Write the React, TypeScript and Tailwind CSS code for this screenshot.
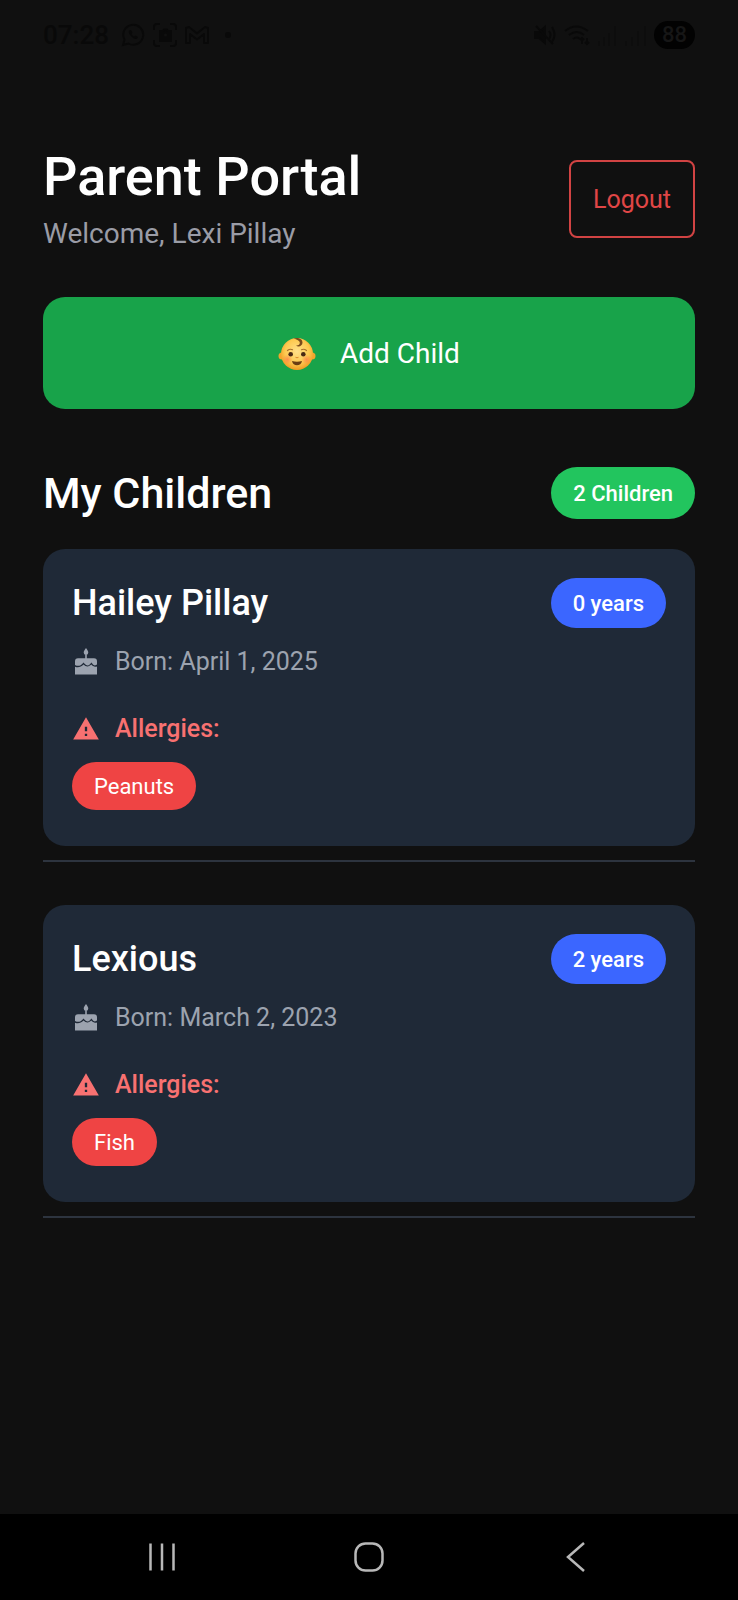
import { MdWarning } from "react-icons/md";

type Child = { name: string; age: number; born: string; allergies: string[] };

const children: Child[] = [
  { name: "Hailey Pillay", age: 0, born: "April 1, 2025", allergies: ["Peanuts"] },
  { name: "Lexious", age: 2, born: "March 2, 2023", allergies: ["Fish"] },
];

function CakeIcon() {
  return (
    <svg className="size-7 shrink-0" viewBox="0 0 28 28" fill="currentColor" aria-hidden="true">
      <path d="M14 0c1.300 2 2.300 3.200 2.300 4.600a2.300 2.300 0 0 1-4.600 0C11.700 3.200 12.700 2 14 0z" />
      <path d="M13.200 6.500h1.600V11h-1.600z" />
      <path d="M6 10h16a3 3 0 0 1 3 3v3.300c-1.800 1.400-3.300.9-4.600-.8l-1-1.200-1.200 1.300c-1.800 2-3.700 2-5.400.1L11.500 14.300l-1.300 1.300c-2 2.100-4.500 2.600-7.200 1V13a3 3 0 0 1 3-3z" transform="translate(0 .3)" />
      <path d="M3 18.700c3 1.200 5.800.6 8.500-2.200 2.500 2.500 5.400 2.500 7.800.1 1.600 1.900 3.500 2.600 5.700 1.800V26.500H3z" />
    </svg>
  );
}

function BabyIcon() {
  return (
    <svg className="h-9 w-[38px]" viewBox="0 0 38 36" aria-hidden="true">
      <defs>
        <radialGradient id="skin" cx="50%" cy="42%" r="58%">
          <stop offset="0" stopColor="#ffe08a" />
          <stop offset="0.65" stopColor="#fdc94f" />
          <stop offset="1" stopColor="#ef9a22" />
        </radialGradient>
        <radialGradient id="cheek">
          <stop offset="0" stopColor="#ff7a4a" stopOpacity="0.7" />
          <stop offset="1" stopColor="#ff7a4a" stopOpacity="0" />
        </radialGradient>
      </defs>
      <circle cx="4" cy="20" r="3.500" fill="#f3a52c" />
      <circle cx="34" cy="20" r="3.500" fill="#f3a52c" />
      <circle cx="19" cy="18" r="16" fill="url(#skin)" />
      <circle cx="9.500" cy="23.500" r="5" fill="url(#cheek)" />
      <circle cx="28.500" cy="23.500" r="5" fill="url(#cheek)" />
      <path d="M15.500 2.500c4-1.500 9 0 9 4 0 3.500-4 5-6.500 3 2.500.2 4-1 3.800-3C21.600 4.500 19 3.500 15.500 2.500z" fill="#7a4a1c" />
      <path d="M9.500 14.500q2.500-2 5-.8M23.500 13.700q2.500-1.200 5 .8" fill="none" stroke="#a9702a" strokeWidth="1.200" strokeLinecap="round" />
      <circle cx="12.700" cy="18.300" r="2.300" fill="#4a2a14" />
      <circle cx="25.300" cy="18.300" r="2.300" fill="#4a2a14" />
      <path d="M17.800 21.500q1.200.8 2.400 0" fill="none" stroke="#d98a2a" strokeWidth="1" strokeLinecap="round" />
      <path d="M14 25q5 1.600 10 0c-.6 3.200-2.500 4.300-5 4.300S14.600 28.200 14 25z" fill="#6b3d14" />
    </svg>
  );
}

function StatusBar() {
  return (
    <div className="flex h-[70px] items-center justify-between px-[43px] text-[#090909]">
      <div className="flex items-center gap-2">
        <span className="text-[26px] leading-8 font-medium">07:28</span>
        <svg className="ml-1 size-6" viewBox="0 0 24 24" fill="none" stroke="currentColor" strokeWidth="2" aria-hidden="true">
          <path d="M2 22l1.500-5.400A10 10 0 1 1 7.400 20.500z" />
          <path d="M8 7.500c-1.500 3 4.500 9.500 8 8.500l1-2-2.500-1.500-1.500 1c-1-.4-2-1.500-2.500-2.500l1-1.500L10 7z" fill="currentColor" stroke="none" />
        </svg>
        <svg className="size-6" viewBox="0 0 24 24" fill="none" stroke="currentColor" strokeWidth="2" aria-hidden="true">
          <path d="M1 7V4a3 3 0 0 1 3-3h3M17 1h3a3 3 0 0 1 3 3v3M23 17v3a3 3 0 0 1-3 3h-3M7 23H4a3 3 0 0 1-3-3v-3" />
          <path d="M7 8h3l1-1.500h3L15 8h3v10H7z" fill="currentColor" />
          <circle cx="12.500" cy="12" r="1.500" fill="#101010" stroke="none" />
        </svg>
        <svg className="size-6" viewBox="0 0 24 24" fill="none" stroke="currentColor" strokeWidth="2" strokeLinejoin="round" aria-hidden="true">
          <path d="M1 20V5l3-1 8 6.500L20 4l3 1v15h-4v-9l-7 5.500L5 11v9z" />
        </svg>
        <span className="ml-2 size-[6px] rounded-full bg-current" />
      </div>
      <div className="flex items-center gap-2">
        <svg className="size-[22px]" viewBox="0 0 22 22" fill="none" stroke="currentColor" strokeWidth="2" aria-hidden="true">
          <path d="M1 8h4l6-5v16l-6-5H1z" fill="currentColor" />
          <path d="M2 2l17 18M15 7q3 4 0 8M18 3q5 8 0 15" />
        </svg>
        <svg className="size-[26px]" viewBox="0 0 26 26" fill="none" stroke="currentColor" strokeWidth="2" aria-hidden="true">
          <path d="M1 9q11-9 23 0M5 13q8-6 15 0M9 17q4-3 7 0M18 22v-6m-2 2l2-2 2 2M23 16v6m-2-2l2 2 2-2" />
        </svg>
        <svg className="h-[22px] w-[48px] text-[#0d0d0d]" viewBox="0 0 48 22" stroke="currentColor" strokeWidth="2" aria-hidden="true">
          <path d="M1 22v-5M6 22v-9M11 22V9M17 22V2M28 22v-5M34 22v-9M40 22V7M47 22V2" />
        </svg>
        <span className="rounded-full bg-[#020202] px-2 text-[22px] leading-7 font-medium text-[#161616]">88</span>
      </div>
    </div>
  );
}

function ChildCard({ child }: { child: Child }) {
  return (
    <li className="border-b-2 border-[#2d343f] pb-[14px]">
      <article className="rounded-[22px] bg-[#1f2937] px-[29px] pt-[29px] pb-9">
        <div className="flex items-center justify-between">
          <h3 className="text-[36px] leading-[50px] font-medium">{child.name}</h3>
          <span className="rounded-full bg-[#3b66ff] px-[22px] pt-[2px] text-[22px] leading-[48px] font-medium">{child.age} years</span>
        </div>
        <p className="mt-4 flex items-center gap-[15px] text-[25px] leading-9 text-[#9ca3af]">
          <CakeIcon />
          Born: {child.born}
        </p>
        <h4 className="mt-[31px] flex items-center gap-[15px] text-[25px] leading-9 font-medium text-[#f87171]">
          <MdWarning className="size-7" aria-hidden="true" />
          Allergies:
        </h4>
        <ul className="mt-[15px] flex flex-wrap gap-3">
          {child.allergies.map((a) => (
            <li key={a} className="rounded-full bg-[#ef4444] px-[22px] pt-[2px] text-[22px] leading-[46px]">{a}</li>
          ))}
        </ul>
      </article>
    </li>
  );
}

export default function App() {
  return (
    <div className="flex min-h-screen flex-col bg-[#101010] font-['Roboto','Noto_Sans',sans-serif] text-white">
      <StatusBar />
      <main className="flex-1 px-[43px] pt-[72px]">
        <header className="flex items-center justify-between">
          <div>
            <h1 className="text-[54px] leading-[70px] font-medium">Parent Portal</h1>
            <p className="text-[28px] leading-[44px] text-[#9a9ca6]">Welcome, Lexi Pillay</p>
          </div>
          <button type="button" className="h-[78px] rounded-lg border-2 border-[#d14343] px-[22px] pt-[2px] text-[25px] text-[#e04646]">Logout</button>
        </header>
        <button type="button" className="mt-[41px] flex h-28 w-full items-center justify-center gap-6 rounded-[22px] bg-[#18a34a] pt-[2px] text-[28px]">
          <BabyIcon />
          Add Child
        </button>
        <section className="mt-[58px]">
          <div className="flex items-center justify-between">
            <h2 className="text-[43px] leading-[52px] font-medium">My Children</h2>
            <span className="rounded-full bg-[#22c55e] px-[22px] pt-[2px] text-[22px] leading-[50px] font-medium">2 Children</span>
          </div>
          <ul className="mt-[30px] flex flex-col gap-[43px]">
            {children.map((c) => (
              <ChildCard key={c.name} child={c} />
            ))}
          </ul>
        </section>
      </main>
      <nav className="flex h-[86px] items-center justify-around bg-black px-[58px] text-[#b8b8b8]" aria-label="System">
        <button type="button" aria-label="Recent apps">
          <svg className="size-8" viewBox="0 0 32 32" fill="none" stroke="currentColor" strokeWidth="2.500" aria-hidden="true">
            <path d="M4.500 2.500v27M16 2.500v27M27.500 2.500v27" />
          </svg>
        </button>
        <button type="button" aria-label="Home">
          <svg className="size-8" viewBox="0 0 32 32" fill="none" stroke="currentColor" strokeWidth="2.500" aria-hidden="true">
            <rect x="2.500" y="2.500" width="27" height="27" rx="10" />
          </svg>
        </button>
        <button type="button" aria-label="Back">
          <svg className="size-8" viewBox="0 0 32 32" fill="none" stroke="currentColor" strokeWidth="2.500" aria-hidden="true">
            <path d="M24 2L8 16l16 14" />
          </svg>
        </button>
      </nav>
    </div>
  );
}
